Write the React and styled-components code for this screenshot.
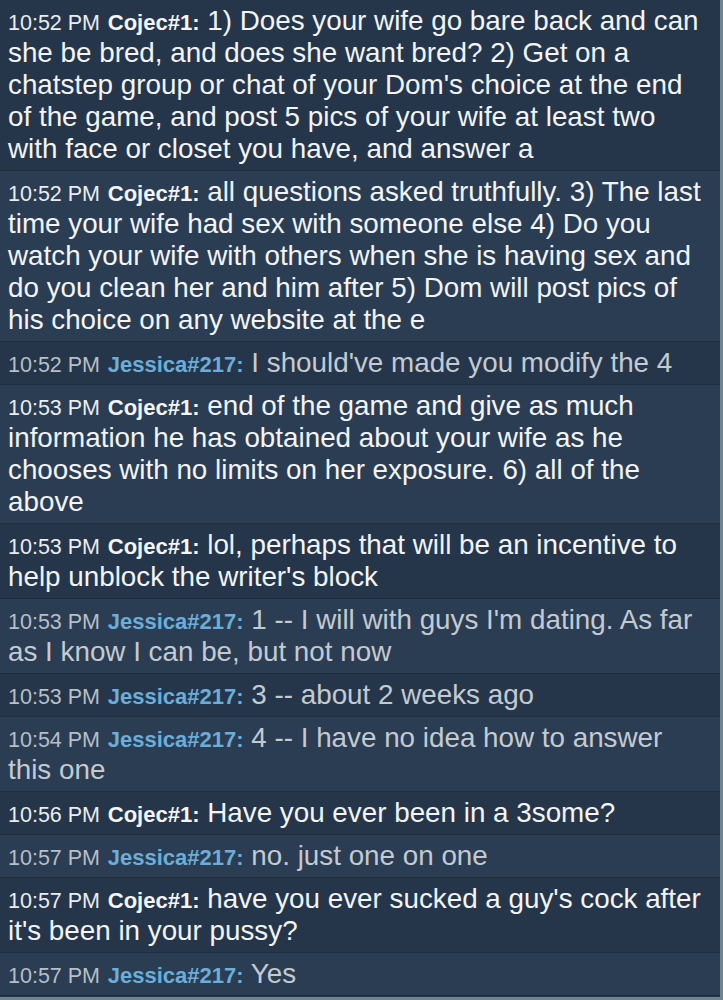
import React from "react";
import styled, { createGlobalStyle } from "styled-components";

const Global = createGlobalStyle`
  html, body { margin: 0; padding: 0; background: #6f8391; }
  body { font-family: "Liberation Sans", Arial, sans-serif; }
`;

const Log = styled.div`
  width: 720px;
  height: 997px;
  overflow: hidden;
  background: #25364a;
  display: flex;
  flex-direction: column;
`;

const Row = styled.div`
  box-sizing: border-box;
  padding: 5px 12px 5px 8px;
  border-bottom: 1px solid #1f2d3d;
  background: ${(p) => (p.$alt ? "#2b3d53" : "#25364a")};
  line-height: 32px;
  font-size: 27.8px;
  color: ${(p) => (p.$guest ? "#c3cad1" : "#f2f4f6")};
  word-wrap: break-word;
`;

const Time = styled.span`
  font-size: 21.5px;
  line-height: 1;
  color: ${(p) => (p.$guest ? "#b7bfc7" : "#eaedf0")};
`;

const Name = styled.span`
  font-size: 22px;
  line-height: 1;
  font-weight: 700;
  color: ${(p) => (p.$guest ? "#6aaed9" : "#f4f6f8")};
`;

const C = "Cojec#1";
const J = "Jessica#217";

const messages = [
  { t: "10:52 PM", u: C, m: "1) Does your wife go bare back and can she be bred, and does she want bred? 2) Get on a chatstep group or chat of your Dom's choice at the end of the game, and post 5 pics of your wife at least two with face or closet you have, and answer a" },
  { t: "10:52 PM", u: C, m: "all questions asked truthfully. 3) The last time your wife had sex with someone else 4) Do you watch your wife with others when she is having sex and do you clean her and him after 5) Dom will post pics of his choice on any website at the e" },
  { t: "10:52 PM", u: J, m: "I should've made you modify the 4" },
  { t: "10:53 PM", u: C, m: "end of the game and give as much information he has obtained about your wife as he chooses with no limits on her exposure. 6) all of the above" },
  { t: "10:53 PM", u: C, m: "lol, perhaps that will be an incentive to help unblock the writer's block" },
  { t: "10:53 PM", u: J, m: "1 -- I will with guys I'm dating. As far as I know I can be, but not now" },
  { t: "10:53 PM", u: J, m: "3 -- about 2 weeks ago" },
  { t: "10:54 PM", u: J, m: "4 -- I have no idea how to answer this one" },
  { t: "10:56 PM", u: C, m: "Have you ever been in a 3some?" },
  { t: "10:57 PM", u: J, m: "no. just one on one" },
  { t: "10:57 PM", u: C, m: "have you ever sucked a guy's cock after it's been in your pussy?" },
  { t: "10:57 PM", u: J, m: "Yes" },
];

export default function App() {
  return (
    <>
      <Global />
      <Log>
        {messages.map((msg, i) => {
          const guest = msg.u === J;
          return (
            <Row key={i} $alt={i % 2 === 1} $guest={guest}>
              <Time $guest={guest}>{msg.t}</Time>{" "}
              <Name $guest={guest}>{msg.u}:</Name> {msg.m}
            </Row>
          );
        })}
      </Log>
    </>
  );
}
